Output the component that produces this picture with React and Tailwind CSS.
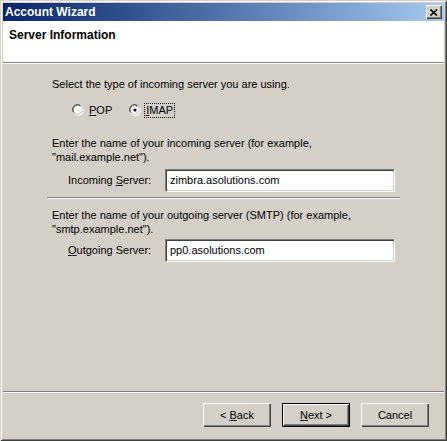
import React from "react";

const font = { fontFamily: '"Liberation Sans", Arial, sans-serif' };

const Radio = ({ checked }) => (
  <svg width="12" height="12" viewBox="0 0 12 12" className="shrink-0">
    <path d="M8 1.2A5 5 0 0 0 1.2 8" fill="none" stroke="#808080" strokeWidth="1" />
    <circle cx="6" cy="6" r="4.5" fill="#fff" />
    <path d="M8.6 2.2A4.3 4.3 0 0 0 2.2 8.6" fill="none" stroke="#404040" strokeWidth="1" />
    <path d="M3.6 10.6A5 5 0 0 0 10.6 3.6" fill="none" stroke="#ffffff" strokeWidth="1" />
    <path d="M3.8 9.6A4.3 4.3 0 0 0 9.6 3.8" fill="none" stroke="#d4d0c8" strokeWidth="1" />
    {checked && <circle cx="6" cy="6" r="1.6" fill="#000" />}
  </svg>
);

const Field = ({ label, access, rest, value }) => (
  <div className="flex items-center pl-[16px]">
    <div className="w-[97px] whitespace-nowrap">
      {label}
      <span className="underline">{access}</span>
      {rest}
    </div>
    <div className="w-[230px] h-[23px] bg-white flex items-center pl-[4px] border border-t-[#808080] border-l-[#808080] border-b-white border-r-white shadow-[inset_1px_1px_#404040,inset_-1px_-1px_#d4d0c8]">
      {value}
    </div>
  </div>
);

const Button = ({ children, isDefault }) => (
  <div
    className={
      "w-[68px] h-[24px] flex items-center justify-center bg-[#d4d0c8] " +
      (isDefault
        ? "border border-black shadow-[inset_1px_1px_#fff,inset_-1px_-1px_#404040,inset_-2px_-2px_#808080]"
        : "shadow-[inset_1px_1px_#fff,inset_-1px_-1px_#404040,inset_-2px_-2px_#808080]")
    }
  >
    {children}
  </div>
);

export default function App() {
  return (
    <div
      style={font}
      className="w-[447px] h-[441px] bg-[#d4d0c8] text-[11px] text-black p-[3px] flex flex-col shadow-[inset_1px_1px_#d4d0c8,inset_-1px_-1px_#404040,inset_2px_2px_#fff,inset_-2px_-2px_#808080]"
    >
      <div className="h-[18px] shrink-0 flex items-center justify-between pl-[2px] pr-[2px] bg-gradient-to-r from-[#0a246a] to-[#a6caf0]">
        <span className="font-bold text-white text-[12px]">Account Wizard</span>
        <div className="w-[16px] h-[14px] bg-[#d4d0c8] flex items-center justify-center shadow-[inset_1px_1px_#fff,inset_-1px_-1px_#404040,inset_-2px_-2px_#808080]">
          <svg width="8" height="7" viewBox="0 0 8 7">
            <path d="M0.5 0.5L7 6.5M7 0.5L0.5 6.5" stroke="#000" strokeWidth="1.6" />
          </svg>
        </div>
      </div>

      <div className="h-[42px] shrink-0 bg-white pl-[6px] pt-[5px] border-b border-[#808080]">
        <div className="font-bold text-[12px]">Server Information</div>
      </div>
      <div className="h-px bg-white shrink-0" />

      <div className="flex-1 flex flex-col pl-[49px] pt-[13px]">
        <div className="leading-[14px]">Select the type of incoming server you are using.</div>

        <div className="flex items-center pl-[20px] mt-[11px] h-[16px]">
          <Radio />
          <span className="ml-[5px]">
            <span className="underline">P</span>OP
          </span>
          <span className="ml-[17px]">
            <Radio checked />
          </span>
          <span className="ml-[4px] px-[1px] outline outline-1 outline-dotted outline-black leading-[13px]">
            <span className="underline">I</span>MAP
          </span>
        </div>

        <div className="leading-[14px] mt-[18px]">
          Enter the name of your incoming server (for example,
          <br />
          "mail.example.net").
        </div>
        <div className="mt-[5px]">
          <Field label="Incoming " access="S" rest="erver:" value="zimbra.asolutions.com" />
        </div>

        <div className="ml-[-5px] w-[353px] h-[2px] mt-[5px] border-t border-[#808080] border-b border-b-white" />

        <div className="leading-[14px] mt-[9px]">
          Enter the name of your outgoing server (SMTP) (for example,
          <br />
          "smtp.example.net").
        </div>
        <div className="mt-[3px]">
          <Field label="" access="O" rest="utgoing Server:" value="pp0.asolutions.com" />
        </div>
      </div>

      <div className="h-[2px] shrink-0 border-t border-[#808080] border-b border-b-white" />
      <div className="h-[45px] shrink-0 flex justify-end items-start pt-[10px] pr-[15px] gap-[11px]">
        <Button>
          &lt; <span className="underline ml-[3px]">B</span>ack
        </Button>
        <Button isDefault>
          <span className="underline">N</span>ext &gt;
        </Button>
        <Button>Cancel</Button>
      </div>
    </div>
  );
}
